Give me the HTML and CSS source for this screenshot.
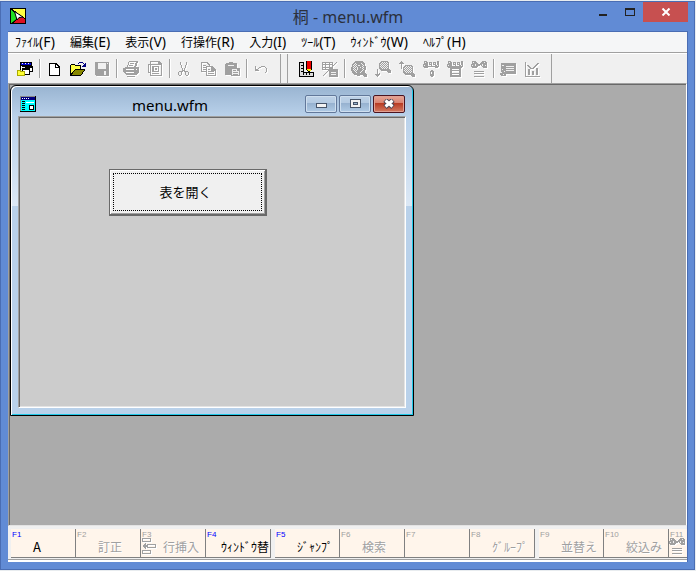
FILE: index.html
```html
<!DOCTYPE html>
<html lang="ja">
<head>
<meta charset="utf-8">
<title>桐 - menu.wfm</title>
<link rel="stylesheet" href="styles.css">
</head>
<body>
<svg class="defs" width="0" height="0" aria-hidden="true">
  <defs>
    <pattern id="dither" width="2" height="2" patternUnits="userSpaceOnUse">
      <path fill="#a0a0a0" d="M0 0h2v2H0z"/><path fill="#f0f0f0" d="M0 0h1v1H0zM1 1h1v1H1z"/>
    </pattern>
    <symbol id="flags" viewBox="0 0 16 7">
      <path d="M1 0h3v1h1v4h3V4H6V1h3v4h3V4h-2V1h3v3h1V0h2v6h-1v1h-3V6H5v1H1V6H0V3h1z"/>
      <path fill="#f0f0f0" d="M2 1h1v1H2zM1 4h1v1H1zM7 2h1v1H7zM11 2h1v1h-1zM14 4h1v1h-1z"/>
    </symbol>
    <symbol id="bow" viewBox="0 0 16 7">
      <path d="M1 0h4v1h1v1h1v1h2V2h1V1h1V0h4v1h1v6h-4V6h-1V5h-1V4H9v1H7v1H6v1H1V6H0V3h1z"/>
      <path fill="#f0f0f0" d="M2 1h1v1H2zM1 4h1v1H1zM4 3h1v2H4zM11 3h1v2h-1zM7 1h2v1H7zM14 4h1v1h-1zM13 1h1v1h-1z"/>
    </symbol>
  </defs>
</svg>
<div class="app">
  <header class="titlebar">
    <svg class="app-icon" viewBox="0 0 16 16" aria-hidden="true">
      <path fill="#000" d="M0 0h16v16H0z"/>
      <path fill="#ff4" d="M1 1h14v9L2 1z"/>
      <path fill="#2d2" d="M1 2l5 4v5l-4 4H1z"/>
      <path fill="#d12" d="M3 15l6-5 3-1 3 2v4z"/>
      <g class="smooth"><path fill="#fff" stroke="#000" d="M4.500 3.500l8.500 5.500-4 .5-2 2.500z"/><path stroke="#000" d="M1 1l4 3M7 11l-5 4"/></g>
    </svg>
    <h1 class="title">桐 - menu.wfm</h1>
    <div class="window-buttons">
      <button class="win-btn" aria-label="最小化"><svg viewBox="0 0 10 8"><path fill="#222" d="M1 6h8v2H1z"/></svg></button>
      <button class="win-btn" aria-label="最大化"><svg viewBox="0 0 10 8"><path fill="#222" fill-rule="evenodd" d="M0 0h10v8H0zM1 2v5h8V2z"/></svg></button>
      <button class="win-btn win-close" aria-label="閉じる"><svg class="smooth" viewBox="0 0 10 8"><path stroke="#fff" stroke-width="2" d="M1.500 .5l7 7M8.500 .5l-7 7"/></svg></button>
    </div>
  </header>

  <div class="client">
    <nav class="menubar">
      <button class="menu">ﾌｧｲﾙ<span>(F)</span></button>
      <button class="menu">編集<span>(E)</span></button>
      <button class="menu">表示<span>(V)</span></button>
      <button class="menu">行操作<span>(R)</span></button>
      <button class="menu">入力<span>(I)</span></button>
      <button class="menu">ﾂｰﾙ<span>(T)</span></button>
      <button class="menu">ｳｨﾝﾄﾞｳ<span>(W)</span></button>
      <button class="menu">ﾍﾙﾌﾟ<span>(H)</span></button>
    </nav>

    <div class="toolbars">
      <div class="toolbar">
        <button class="tool" aria-label="ウィンドウ一覧"><svg viewBox="0 0 16 16">
          <path fill="#000" d="M3 1h12v5H3z"/><path fill="#00c" d="M4 2h10v2H4z"/><path fill="#fff" d="M5 2h1v1H5zM8 2h1v1H8zM11 2h1v1h-1zM4 5h1v3H4z"/><path fill="#000" d="M3 5h1v4H3z"/>
          <path fill="#000" d="M8 5h8v6H8z"/><path fill="#fff" d="M9 7h6v3H9z"/>
          <path fill="#000" d="M5 7h8v7H5z"/><path fill="#fff" d="M6 9h6v4H6z"/>
          <path fill="#aa0" d="M0 9h4v1h4v5H0z"/><path fill="#ff3" d="M1 10h2v1h4v3H1z"/>
        </svg></button>
        <span class="sep"></span>
        <button class="tool" aria-label="新規"><svg viewBox="0 0 16 16">
          <path fill="#000" d="M3 2h7l4 4v9H3z"/><path fill="#fff" d="M4 3h5v4h4v7H4z"/><path fill="#fff" d="M10 4h1v1h1v1h-2z"/>
        </svg></button>
        <button class="tool" aria-label="開く"><svg viewBox="0 0 16 16">
          <path fill="#000" d="M0 4h1V3h4v1h6v4h4v1l-4 6H0z"/><path fill="#ff4" d="M1 4h4v1h5v3H5l-4 5z"/><path fill="#880" d="M5 9h9l-3 5H2z"/>
          <path fill="#000080" d="M9 1h4v1H9zM8 2h1v1H8zM13 2h1v1h-1zM15 2h1v4h-4V5h1V4h1V3h1z"/>
        </svg></button>
        <button class="tool" aria-label="上書き保存" disabled><svg viewBox="0 0 16 16">
          <path d="M1 1h14v14H2l-1-1z"/><path fill="#f0f0f0" d="M4 2h8v6H4zM10 10h2v4h-2zM13 2h1v1h-1z"/>
        </svg></button>
        <span class="sep"></span>
        <button class="tool" aria-label="印刷" disabled><svg viewBox="0 0 16 16">
          <path fill-rule="evenodd" d="M6 0h9v1l-2 5h2l1 1v4l-3 3H3l-3-3V7l3-1h1zM6 2L5 6h6l2-5H6zM3 8v1h8V8zM3 11v1h8v-1zM13 8v1h1V8z"/><path d="M7 2h4v1H7zM6 4h4v1H6zM4 15h8v1H4z"/>
        </svg></button>
        <button class="tool" aria-label="印刷プレビュー" disabled><svg viewBox="0 0 16 16">
          <path fill-rule="evenodd" d="M3 0h9l3 3v11l-1 1H3v-3H1V3h2zM4 1v2h7V1zM2 4v7h1V4zM4 4v10h10V4z"/><path fill-rule="evenodd" d="M5 5h7v6H5zM7 6v4h4V6z"/><path d="M8 7h2v2H8zM5 12h7v1H5z"/>
        </svg></button>
        <span class="sep"></span>
        <button class="tool" aria-label="切り取り" disabled><svg viewBox="0 0 16 16">
          <path d="M4 1h1v3h1v3h1v2h1V7h1V4h1V1h1v3h-1v3H9v3h3v1h1v3h-1v1h-2v-1H9v-3H8v-1H7v1H6v3H5v1H3v-1H2v-3h1v-1h3V7H5V4H4z"/><path fill="#f0f0f0" d="M3 11h2v3H3zM10 11h2v3h-2z"/>
        </svg></button>
        <button class="tool" aria-label="コピー" disabled><svg viewBox="0 0 16 16">
          <path fill-rule="evenodd" d="M1 1h6l3 3v1h2l4 4v6H6v-4H1zM2 2v8h4V5h3L7 3V2zM7 6v8h8v-4h-4V6z"/><path d="M3 4h3v1H3zM3 6h3v1H3zM3 8h3v1H3zM8 8h2v1H8zM8 10h6v1H8zM8 12h6v1H8z"/>
        </svg></button>
        <button class="tool" aria-label="貼り付け" disabled><svg viewBox="0 0 16 16">
          <path d="M1 3l1-1h3V1h4v1h3l1 1v4h3v8H7v-1H1z"/><path fill="#f0f0f0" d="M4 4h6v1H4zM8 8h5v2h2v4H8z"/><path d="M9 9h3v1H9zM9 11h5v1H9zM9 13h5v1H9z"/>
        </svg></button>
        <span class="sep"></span>
        <button class="tool" aria-label="元に戻す" disabled><svg viewBox="0 0 16 16">
          <path d="M2 5h1v3h2V7h1V6h2V5h4v1h1v1h1v4h-1v1h-1v-1h1V7h-1V6H8v1H6v1H5v1h1v1H2z"/>
        </svg></button>
      </div>
      <div class="toolbar">
        <button class="tool" aria-label="定義"><svg viewBox="0 0 16 16">
          <path fill="#000" d="M1 1h5v10h10v5H1z"/><path fill="#ddd" d="M2 2h3v10h10v3H2z"/><path fill="#000" d="M3 4h2v1H3zM3 7h2v1H3zM3 10h2v1H3zM5 12h1v2H5zM8 12h1v2H8zM11 12h1v2h-1z"/>
          <path fill="#000" d="M8 0h6v8l-2 3h-2L8 8z"/><path fill="#e00" d="M9 0h4v8H9z"/><path fill="#fe0" d="M9 8h4v1l-1 1h-2L9 9z"/>
        </svg></button>
        <button class="tool" aria-label="表編集" disabled><svg viewBox="0 0 16 16">
          <path fill-rule="evenodd" d="M0 1h11v8H0zM1 2v1h2V2zM4 2v1h3V2zM8 2v1h2V2zM1 4v2h2V4zM4 4v2h3V4zM8 4v2h2V4zM1 7v1h2V7zM4 7v1h3V7z"/>
          <path d="M14 1h1v1h-1v1h-1v1h-1v1h-1v1h-1v1H9v1H8v1H7v1H6v1H5v1H4v1H3v1H2v1H1v-1h1v-1h1v-1h1v-1h1v-1h1V9h1V8h1V7h1V6h1V5h1V4h1V3h1V2h1zM7 8h9v8H7z"/><path fill="#f0f0f0" d="M9 11h5v1H9zM9 13h5v1H9z"/>
        </svg></button>
        <span class="sep"></span>
        <button class="tool" aria-label="検索" disabled><svg viewBox="0 0 16 16">
          <path d="M4 0h7l3 3 1 4-1 4 2 3v2h-3l-2-2-4 1-5-2-2-4 1-6z"/><path fill="url(#dither)" d="M4 2h2v4H5v3h1v3H4l-2-3V5zM9 2h2l2 3v4l-2 3H9l2-3V5z"/><path fill="#f0f0f0" d="M7 4h2v1H7zM6 6h1v3H6zM9 6h1v1H9z"/>
        </svg></button>
        <button class="tool" aria-label="次を検索" disabled><svg viewBox="0 0 16 16">
          <path d="M6 0h6l2 2v5l2 3v2h-3l-2-2H6L4 7V2zM2 8h1v5h2l-2 3H2l-2-3h2zM4 12h1v1H4z"/><path fill="url(#dither)" d="M7 1h4l2 2v3l-2 2H7L5 6V3z"/>
        </svg></button>
        <button class="tool" aria-label="前を検索" disabled><svg viewBox="0 0 16 16">
          <path d="M2 0h1l2 3H3v5H2V3H0zM6 4h6l2 2v5l2 3v2h-3l-2-2H6l-2-2V6z"/><path fill="url(#dither)" d="M7 5h4l2 2v3l-2 2H7l-2-2V7z"/>
        </svg></button>
        <button class="tool" aria-label="絞り込み" disabled><svg viewBox="0 0 16 16">
          <use href="#flags" width="16" height="7"/><path fill-rule="evenodd" d="M8 9h2v1h1v5h-1v1H8v-1H7v-5h1zM8 11v2h1v-2z"/>
        </svg></button>
        <button class="tool" aria-label="条件一覧" disabled><svg viewBox="0 0 16 16">
          <use href="#flags" width="16" height="7"/><path fill-rule="evenodd" d="M3 6h11v10H3zM5 8v1h7V8zM5 10v2h7v-2zM5 13v1h7v-1z"/>
        </svg></button>
        <button class="tool" aria-label="絞り込み解除" disabled><svg viewBox="0 0 16 16">
          <use href="#bow" width="16" height="7"/><path d="M3 10h10v1H3zM3 12h10v1H3zM3 15h10v1H3z"/>
        </svg></button>
        <span class="sep"></span>
        <button class="tool" aria-label="フォーム" disabled><svg viewBox="0 0 16 16">
          <path d="M1 2h15v11H6v2H1v-1H0v-2h1z"/><path fill="#f0f0f0" d="M2 4h2v1H2zM6 5h8v1H6zM6 7h8v1H6zM6 9h8v1H6zM2 8h1v1H2zM4 10h1v1H4zM1 11h1v1H1zM3 13h1v1H3z"/>
        </svg></button>
        <button class="tool" aria-label="グラフ" disabled><svg viewBox="0 0 16 16">
          <path d="M1 1h1v14h14v1H1zM4 8h2v6H4zM8 10h2v4H8zM12 7h2v7h-2zM3 4h2v1h1v1h1v1h2V6h1V5h1V4h1V3h1V2h2v1h-1v1h-1v1h-1v1h-1v1h-1v1H6V7H5V6H4V5H3z"/>
        </svg></button>
      </div>
    </div>

    <main class="mdi">
      <section class="child" aria-label="menu.wfm">
        <header class="child-title">
          <svg class="child-icon" viewBox="0 0 16 16" aria-hidden="true">
            <path fill="#000" d="M0 0h16v16H0z"/><path fill="#888" d="M0 0h15v1H1v14H0z"/><path fill="#000080" d="M1 1h14v3H1z"/><path fill="#fff" d="M2 2h1v1H2zM4 2h1v1H4zM6 2h1v1H6zM8 2h1v1H8z"/>
            <path fill="#0ff" d="M1 4h14v11H1z"/><path fill="#000" d="M2 5h3v1H2zM2 7h3v1H2zM2 9h3v1H2zM2 11h3v1H2zM2 13h3v1H2zM9 9h5v5H9z"/><path fill="#fff" d="M6 6h8v1H6zM10 10h3v3h-3z"/>
          </svg>
          <h2 class="title">menu.wfm</h2>
          <div class="child-buttons">
            <button class="aero" aria-label="最小化"><svg viewBox="0 0 12 10"><path fill="#475468" d="M1 4h11v5H1z"/><path fill="#f2f2f2" d="M2 5h9v3H2z"/></svg></button>
            <button class="aero" aria-label="最大化"><svg viewBox="0 0 12 10"><path fill="#475468" d="M1 0h11v9H1z"/><path fill="#f2f2f2" d="M2 1h9v7H2z"/><path fill="#475468" d="M4 3h5v3H4z"/><path fill="#9ab4cf" d="M5 4h3v1H5z"/></svg></button>
            <button class="aero aero-close" aria-label="閉じる"><svg class="smooth" viewBox="0 0 12 10"><path stroke="#4b4453" stroke-width="5" d="M2 1l8 7M10 1l-8 7"/><path stroke="#fff" stroke-width="3" d="M2.500 1.500l7 6M9.500 1.500l-7 6"/></svg></button>
          </div>
        </header>
        <div class="form">
          <button class="form-button"><span>表を開く</span></button>
        </div>
      </section>
    </main>

    <footer class="fkeys">
      <button class="fkey"><kbd>F1</kbd><span class="label latin">A</span></button>
      <button class="fkey" disabled><kbd>F2</kbd><span class="label">訂正</span></button>
      <button class="fkey" disabled><kbd>F3</kbd><svg class="key-icon" viewBox="0 0 16 16"><path fill-rule="evenodd" d="M1 0h9v4H1zM2 1v2h7V1zM1 12h9v4H1zM2 13v2h7v-2zM6 6h9v4H6zM7 7v2h7V7z"/><path d="M4 5h1v2h2v2H5v2H4v-1H3V9H2V7h1V6h1z"/></svg><span class="label">行挿入</span></button>
      <button class="fkey group-end"><kbd>F4</kbd><span class="label">ｳｨﾝﾄﾞｳ替</span></button>
      <button class="fkey"><kbd>F5</kbd><span class="label">ｼﾞｬﾝﾌﾟ</span></button>
      <button class="fkey" disabled><kbd>F6</kbd><span class="label">検索</span></button>
      <button class="fkey" disabled><kbd>F7</kbd><span class="label"></span></button>
      <button class="fkey group-end" disabled><kbd>F8</kbd><span class="label">ｸﾞﾙｰﾌﾟ</span></button>
      <button class="fkey" disabled><kbd>F9</kbd><span class="label">並替え</span></button>
      <button class="fkey" disabled><kbd>F10</kbd><span class="label">絞込み</span></button>
      <button class="fkey" disabled><kbd>F11</kbd><svg class="key-icon" viewBox="0 0 16 16"><use href="#bow" width="16" height="7"/><path d="M3 10h10v1H3zM3 12h10v1H3zM3 15h10v1H3z"/></svg></button>
    </footer>
  </div>
</div>
</body>
</html>
```

FILE: styles.css
```css
* { box-sizing: border-box; }

body {
  margin: 0;
  height: 100vh;
  padding: 1px 1px 1px 0;
  background: #e8ecef;
  font-family: "Noto Sans", "Noto Sans CJK JP", sans-serif;
  font-size: 12px;
  color: #000;
}

button {
  margin: 0;
  padding: 0;
  border: 0;
  background: none;
  font: inherit;
  color: inherit;
}

svg { display: block; shape-rendering: crispEdges; }
.smooth { shape-rendering: auto; }
.defs { position: absolute; }

.app {
  display: flex;
  flex-direction: column;
  height: 100%;
  padding: 0 6px 7px 7px;
  border: 1px solid #4a6db3;
  background: #618bd5;
}

.title {
  margin: 0;
  font-size: 15px;
  font-weight: 400;
  line-height: 20px;
  text-align: center;
}

/* Main title bar */
.titlebar {
  display: grid;
  grid-template-columns: 96px 1fr 96px;
  flex: none;
  height: 29px;
}
.app-icon { width: 16px; height: 16px; margin: 6px 0 0 2px; }
.titlebar .title { margin-top: 5px; font-size: 16px; color: #2b303c; }
.window-buttons { display: flex; justify-content: flex-end; }
.win-btn {
  display: flex;
  align-items: center;
  justify-content: center;
  flex: none;
  width: 27px;
  height: 20px;
}
.win-btn svg { width: 10px; height: 8px; }
.win-close { width: 45px; background: #c75050; }

.client {
  display: flex;
  flex-direction: column;
  flex: 1;
  min-height: 0;
  border: 1px solid #4a6db3;
  border-width: 1px 1px 0 0;
  background: #f0f0f0;
}

/* Menu bar */
.menubar {
  display: flex;
  gap: 15px;
  flex: none;
  height: 21px;
  padding-left: 7px;
  border-bottom: 1px solid #a0a0a0;
  background: #f5f6f7;
}
.menu {
  display: flex;
  align-items: center;
  height: 19px;
  font-family: "Noto Sans CJK JP", sans-serif;
  line-height: 18px;
  white-space: nowrap;
}
.menu span { font-family: "Noto Sans", sans-serif; font-size: 14px; }

/* Toolbars */
.toolbars {
  display: flex;
  flex: none;
  height: 30px;
  border-top: 1px solid #fff;
}
.toolbar {
  display: flex;
  align-items: center;
  padding: 0 7px 0 5px;
  border-right: 1px solid #a0a0a0;
}
.toolbar + .toolbar { margin-left: 6px; padding-left: 6px; border-left: 1px solid #a0a0a0; }
.tool {
  display: flex;
  align-items: center;
  justify-content: center;
  width: 24px;
  height: 24px;
}
.tool svg { width: 16px; height: 16px; }
.tool:disabled svg,
.key-icon { fill: #a0a0a0; filter: drop-shadow(1px 1px 0 #fff); }
.sep {
  width: 5px;
  height: 19px;
  background: linear-gradient(90deg, transparent 2px, #a0a0a0 2px 3px, #fff 3px 4px, transparent 4px);
}

/* Workspace and its child window */
.mdi {
  position: relative;
  flex: 1;
  min-height: 0;
  border: 1px solid;
  border-color: #a0a0a0 #fff #e3e3e3 #a0a0a0;
  background: #ababab;
  box-shadow: inset 1px 1px 0 #696969;
}
.child {
  position: absolute;
  top: 1px;
  left: 1px;
  display: flex;
  flex-direction: column;
  width: 404px;
  height: 331px;
  padding: 0 7px 7px;
  border: 1px solid #000;
  border-radius: 6px 6px 0 0;
  background:
    linear-gradient(#99b4d1, #b9d1ea) 0 0 / 100% 30px no-repeat,
    linear-gradient(#b9d1ea, #dce8f5) 0 30px / 100% 90px no-repeat,
    #b9d1ea;
  box-shadow: inset 1px 1px 0 #fff, inset -1px -1px 0 #20c8e8;
}
.child-title {
  display: grid;
  grid-template-columns: 18px 1fr 102px;
  flex: none;
  height: 30px;
}
.child-icon { width: 16px; height: 16px; margin: 10px 0 0 2px; }
.child-title .title { margin-top: 9px; }
.child-buttons {
  display: flex;
  justify-content: flex-end;
  gap: 2px;
  padding: 9px 1px 0 0;
}
.aero {
  display: flex;
  align-items: center;
  justify-content: center;
  width: 32px;
  height: 18px;
  border: 1px solid #62789a;
  border-radius: 2px;
  background: linear-gradient(#bed2e7, #b4cae2 45%, #96b1cf 45%, #b0cbe6);
  box-shadow: inset 0 0 0 1px #cfdfef;
}
.aero svg { width: 12px; height: 10px; }
.aero-close {
  border-color: #4b1420;
  background: linear-gradient(#e6a798, #d9806e 45%, #b83a22 45%, #d37a62);
  box-shadow: inset 0 0 0 1px #e0a094;
}
.form {
  display: flex;
  align-items: flex-start;
  flex: 1;
  padding: 52px 0 0 90px;
  border: 1px solid;
  border-color: #a0a0a0 #fff #fff #a0a0a0;
  background: #ccc;
  box-shadow: inset 1px 1px 0 #696969, inset -1px -1px 0 #e3e3e3;
}
.form-button {
  display: flex;
  width: 158px;
  height: 47px;
  padding: 3px;
  border: 1px solid #696969;
  border-width: 1px 2px 2px 1px;
  background: #f0f0f0;
  box-shadow: inset 1px 1px 0 #fff, inset -1px -1px 0 #a0a0a0;
  font-family: "Noto Sans CJK JP", sans-serif;
  font-size: 13px;
}
.form-button span {
  display: flex;
  align-items: center;
  justify-content: center;
  flex: 1;
  height: 100%;
  padding: 0 4px 2px 0;
  border: 1px dotted #000;
}

/* Function keys */
.fkeys {
  display: flex;
  flex: none;
  height: 36px;
  padding: 3px 0 4px 3px;
  overflow: hidden;
  background: linear-gradient(#f0f0f0 33px, #a0a0a0 33px 34px, #fff 34px);
}
.fkey {
  display: grid;
  grid-template: 9px 1fr / 1fr;
  flex: none;
  width: 65px;
  border-right: 1px solid #808080;
  border-bottom: 1px solid #808080;
  background: #fff5eb;
  font-family: "Noto Sans CJK JP", sans-serif;
  text-align: left;
}
.group-end { margin-right: 4px; }
.fkey kbd {
  grid-area: 1 / 1;
  padding-left: 1px;
  font-family: "Liberation Sans", sans-serif;
  font-size: 8px;
  line-height: 12px;
  color: #00f;
}
.fkey:disabled kbd { color: #a0a0a0; }
.key-icon { grid-area: 2 / 1; width: 16px; height: 16px; }
.label {
  grid-area: 2 / 1;
  justify-self: end;
  min-width: 42px;
  padding-right: 1px;
  line-height: 17px;
  white-space: nowrap;
}
.latin { font-size: 13px; }
.fkey:disabled .label { color: #a0a0a0; text-shadow: 1px 1px 0 #fff; }
```
